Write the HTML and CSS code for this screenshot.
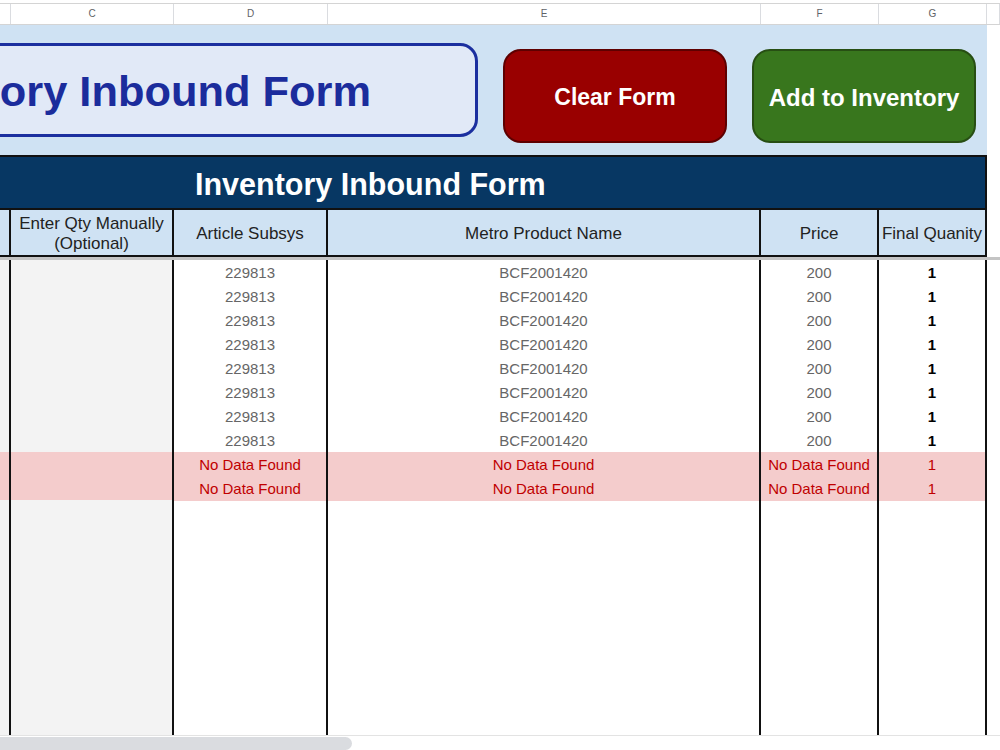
FILE: index.html
```html
<!DOCTYPE html>
<html lang="en">
<head>
    <meta charset="UTF-8">
    <meta name="viewport" content="width=device-width, initial-scale=1.0">
    <title>Inventory Inbound Form</title>
    <link rel="stylesheet" href="styles.css">
</head>
<body>
    <div class="page">
        <div class="colbar">
            <div class="colhead"></div>
            <div class="colhead">C</div>
            <div class="colhead">D</div>
            <div class="colhead">E</div>
            <div class="colhead">F</div>
            <div class="colhead">G</div>
            <div class="colhead"></div>
        </div>

        <div class="top">
            <div class="banner">
                <div class="title-box"><span>Inventory Inbound Form</span></div>
                <div class="btn btn-clear">Clear Form</div>
                <div class="btn btn-add">Add to Inventory</div>
            </div>
        </div>

        <div class="form-title">Inventory Inbound Form</div>

        <div class="row head-row">
            <div class="cell"></div>
            <div class="cell two-line">Enter Qty Manually<br>(Optional)</div>
            <div class="cell">Article Subsys</div>
            <div class="cell">Metro Product Name</div>
            <div class="cell">Price</div>
            <div class="cell">Final Quanity</div>
            <div class="cell"></div>
        </div>

        <div class="frozen"></div>

        <div class="rows">
            <div class="row data-row">
                <div class="cell"></div><div class="cell"></div>
                <div class="cell">229813</div><div class="cell">BCF2001420</div><div class="cell">200</div>
                <div class="cell qty">1</div><div class="cell"></div>
            </div>
            <div class="row data-row">
                <div class="cell"></div><div class="cell"></div>
                <div class="cell">229813</div><div class="cell">BCF2001420</div><div class="cell">200</div>
                <div class="cell qty">1</div><div class="cell"></div>
            </div>
            <div class="row data-row">
                <div class="cell"></div><div class="cell"></div>
                <div class="cell">229813</div><div class="cell">BCF2001420</div><div class="cell">200</div>
                <div class="cell qty">1</div><div class="cell"></div>
            </div>
            <div class="row data-row">
                <div class="cell"></div><div class="cell"></div>
                <div class="cell">229813</div><div class="cell">BCF2001420</div><div class="cell">200</div>
                <div class="cell qty">1</div><div class="cell"></div>
            </div>
            <div class="row data-row">
                <div class="cell"></div><div class="cell"></div>
                <div class="cell">229813</div><div class="cell">BCF2001420</div><div class="cell">200</div>
                <div class="cell qty">1</div><div class="cell"></div>
            </div>
            <div class="row data-row">
                <div class="cell"></div><div class="cell"></div>
                <div class="cell">229813</div><div class="cell">BCF2001420</div><div class="cell">200</div>
                <div class="cell qty">1</div><div class="cell"></div>
            </div>
            <div class="row data-row">
                <div class="cell"></div><div class="cell"></div>
                <div class="cell">229813</div><div class="cell">BCF2001420</div><div class="cell">200</div>
                <div class="cell qty">1</div><div class="cell"></div>
            </div>
            <div class="row data-row">
                <div class="cell"></div><div class="cell"></div>
                <div class="cell">229813</div><div class="cell">BCF2001420</div><div class="cell">200</div>
                <div class="cell qty">1</div><div class="cell"></div>
            </div>
            <div class="row data-row missing">
                <div class="cell"></div><div class="cell"></div>
                <div class="cell">No Data Found</div><div class="cell">No Data Found</div><div class="cell">No Data Found</div>
                <div class="cell qty">1</div><div class="cell"></div>
            </div>
            <div class="row data-row missing">
                <div class="cell"></div><div class="cell"></div>
                <div class="cell">No Data Found</div><div class="cell">No Data Found</div><div class="cell">No Data Found</div>
                <div class="cell qty">1</div><div class="cell"></div>
            </div>
            <div class="row data-row filler">
                <div class="cell"></div><div class="cell"></div>
                <div class="cell"></div><div class="cell"></div><div class="cell"></div>
                <div class="cell"></div><div class="cell"></div>
            </div>
        </div>

        <div class="scrollbar">
            <div class="thumb"></div>
        </div>
    </div>
</body>
</html>
```

FILE: styles.css
```css
* {
    margin: 0;
    padding: 0;
    box-sizing: border-box;
}

body {
    font-family: 'Liberation Sans', Arial, sans-serif;
    background: white;
    color: #222;
    overflow: hidden;
}

.page {
    width: 1000px;
    height: 750px;
    overflow: hidden;
    display: flex;
    flex-direction: column;
    padding-top: 3px;
}

/* sheet columns: B C D E F G + rest */
.colbar,
.row {
    display: grid;
    grid-template-columns: 11px 163px 154px 433px 118px 108px 13px;
}

.colbar {
    height: 22px;
    border-top: 1px solid #d4d4d4;
    border-bottom: 1px solid #d4d4d4;
}

.colhead {
    border-right: 1px solid #dadce0;
    font-size: 10px;
    color: #5f6368;
    text-align: center;
    line-height: 20px;
}

.top {
    height: 130px;
    width: 987px;
    background: #cfe2f3;
}

.banner {
    display: flex;
    align-items: flex-start;
    gap: 25px;
}

.title-box {
    margin-left: -235px;
    margin-top: 18px;
    width: 713px;
    height: 94px;
    flex-shrink: 0;
    background: #e1e9f7;
    border: 3px solid #1b2f9f;
    border-radius: 18px;
    display: flex;
    align-items: center;
    justify-content: center;
    padding-top: 2px;
    font-size: 43.4px;
    font-weight: bold;
    color: #1b2c9c;
    white-space: nowrap;
}

.btn {
    margin-top: 24px;
    width: 224px;
    height: 94px;
    flex-shrink: 0;
    border-radius: 18px;
    display: flex;
    align-items: center;
    justify-content: center;
    padding-top: 3px;
    color: white;
    font-weight: bold;
    white-space: nowrap;
}

.btn-clear {
    background: #990000;
    border: 2px solid #5e0000;
    font-size: 23px;
}

.btn-add {
    background: #38761d;
    border: 2px solid #274e13;
    font-size: 24px;
}

.form-title {
    width: 987px;
    height: 55px;
    background: #073763;
    border: 2px solid #111;
    border-left: none;
    color: white;
    font-size: 30.5px;
    font-weight: bold;
    line-height: 55px;
    padding-left: 195px;
    white-space: nowrap;
}

.head-row {
    height: 47px;
}

.head-row .cell {
    background: #cfe2f3;
    border-right: 2px solid #111;
    border-bottom: 2px solid #111;
    display: flex;
    align-items: center;
    justify-content: center;
    padding-top: 3px;
    text-align: center;
    font-size: 17px;
    color: #222;
    white-space: nowrap;
}

.head-row .two-line {
    line-height: 20px;
}

.head-row .cell:last-child {
    background: white;
    border: none;
}

.frozen {
    height: 3px;
    background: #c4c4c4;
}

.rows {
    flex: 1;
    display: flex;
    flex-direction: column;
}

.data-row {
    height: 24px;
}

.data-row .cell {
    border-right: 2px solid #111;
    text-align: center;
    font-size: 15px;
    line-height: 25px;
    color: #666;
    white-space: nowrap;
}

.data-row .cell:nth-child(1),
.data-row .cell:nth-child(2) {
    background: #f3f3f3;
}

.data-row .cell:last-child {
    border: none;
    background: white;
}

.data-row .qty {
    color: #000;
    font-weight: bold;
}

.data-row.missing .cell {
    background: #f4cccc;
    color: #c00000;
}

.data-row.missing .qty {
    font-weight: normal;
}

.data-row.missing .cell:last-child {
    background: white;
}

.data-row.filler {
    flex: 1;
}

.scrollbar {
    height: 15px;
    border-top: 1px solid #e3e3e3;
    padding-top: 1px;
}

.thumb {
    width: 352px;
    height: 13px;
    background: #dadce0;
    border-radius: 0 7px 7px 0;
}
```
